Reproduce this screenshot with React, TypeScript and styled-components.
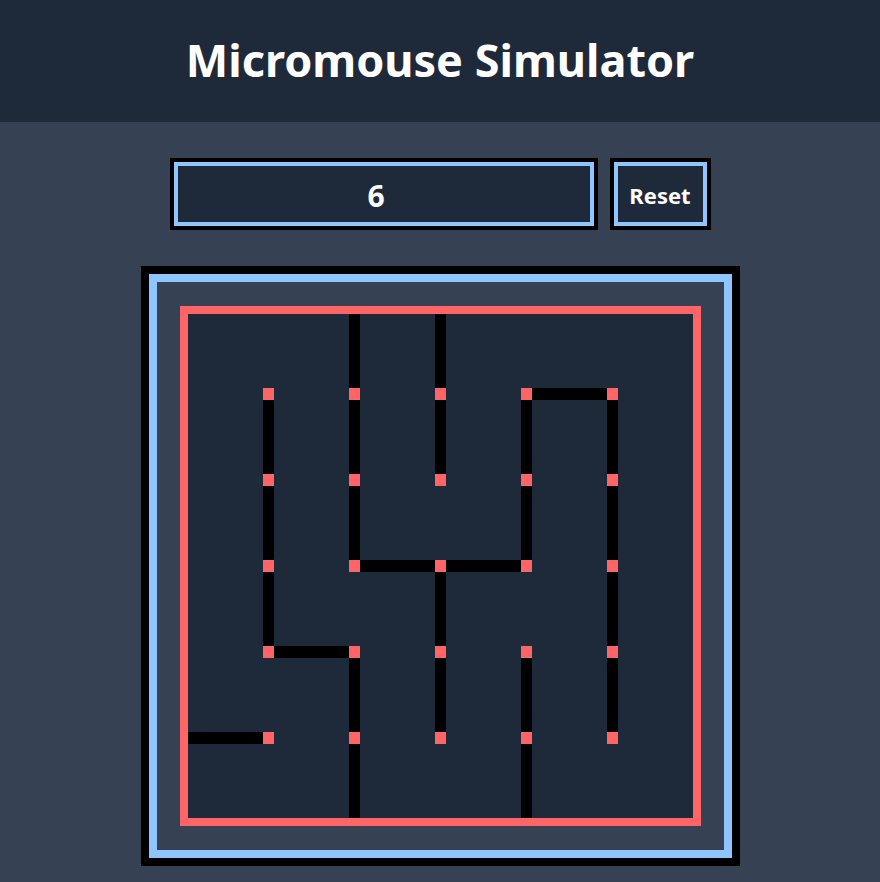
import React, { useState } from "react";
import styled, { createGlobalStyle, css } from "styled-components";

const color = {
  panel: "#1e2939",
  page: "#364153",
  accent: "#8ec5ff",
  edge: "#ff6467",
  wall: "#000000",
  text: "#ffffff",
};

const GlobalStyle = createGlobalStyle`
  *, *::before, *::after {
    box-sizing: border-box;
  }
  body {
    margin: 0;
    background: ${color.page};
    color: ${color.text};
    font-family: "Segoe UI", "Noto Sans", "Open Sans", sans-serif;
  }
`;

const Page = styled.div`
  display: flex;
  flex-direction: column;
`;

const Header = styled.header`
  padding: 24px 16px 26px;
  background: ${color.panel};
  text-align: center;
`;

const Title = styled.h1`
  margin: 0;
  font-size: 45px;
  line-height: 72px;
  font-weight: 700;
`;

const Main = styled.main`
  display: flex;
  flex-direction: column;
  align-items: center;
  gap: 36px;
  padding: 36px 16px 16px;
`;

const Controls = styled.form`
  display: grid;
  grid-template-columns: 1fr 101px;
  gap: 12px;
  width: 100%;
  max-width: 541px;
`;

const controlFrame = css`
  height: 72px;
  min-width: 0;
  padding: 6px 4px 4px;
  border: 4px solid ${color.wall};
  border-radius: 0;
  box-shadow: inset 0 0 0 4px ${color.accent};
  background: ${color.panel};
  color: ${color.text};
  font-family: inherit;
  font-weight: 700;
  text-align: center;
  outline: none;
`;

const SizeInput = styled.input`
  ${controlFrame}
  font-size: 30px;
`;

const ResetButton = styled.button`
  ${controlFrame}
  font-size: 22px;
  cursor: pointer;
`;

const Frame = styled.section`
  width: 100%;
  max-width: 599px;
  padding: 32px 31px;
  border: 8px solid ${color.wall};
  box-shadow: inset 0 0 0 8px ${color.accent};
`;

const Maze = styled.div`
  display: grid;
  grid-template-columns: 75fr repeat(5, 11fr 75fr);
  grid-template-rows: 74fr repeat(5, 12fr 74fr);
  aspect-ratio: 521 / 520;
  border: 8px solid ${color.edge};
  background: ${color.panel};
`;

const Piece = styled.div<{ $kind: "wall" | "post"; $row: number; $col: number }>`
  grid-row: ${(p) => p.$row};
  grid-column: ${(p) => p.$col};
  background: ${(p) => (p.$kind === "wall" ? color.wall : color.edge)};
`;

// Cells sit on odd grid tracks, posts and the walls between them on even ones.
const uprightWalls: Record<number, number[]> = {
  1: [2, 3, 4],
  2: [1, 2, 3, 5, 6],
  3: [1, 2, 4, 5],
  4: [2, 3, 5, 6],
  5: [2, 3, 4, 5],
};

const levelWalls: Record<number, number[]> = {
  1: [5],
  3: [3, 4],
  4: [2],
  5: [1],
};

const walls = [
  ...Object.entries(uprightWalls).flatMap(([post, rows]) =>
    rows.map((row) => ({ row: row * 2 - 1, col: Number(post) * 2 }))
  ),
  ...Object.entries(levelWalls).flatMap(([post, cols]) =>
    cols.map((col) => ({ row: Number(post) * 2, col: col * 2 - 1 }))
  ),
];

const posts = [1, 2, 3, 4, 5].flatMap((r) =>
  [1, 2, 3, 4, 5].map((c) => ({ row: r * 2, col: c * 2 }))
);

export default function App() {
  const [size, setSize] = useState("6");

  return (
    <Page>
      <GlobalStyle />
      <Header>
        <Title>Micromouse Simulator</Title>
      </Header>
      <Main>
        <Controls onSubmit={(e) => e.preventDefault()}>
          <SizeInput
            type="number"
            aria-label="Maze size"
            value={size}
            onChange={(e) => setSize(e.target.value)}
          />
          <ResetButton type="button" onClick={() => setSize("6")}>
            Reset
          </ResetButton>
        </Controls>
        <Frame aria-label="Maze">
          <Maze>
            {walls.map((w) => (
              <Piece key={`w${w.row}-${w.col}`} $kind="wall" $row={w.row} $col={w.col} />
            ))}
            {posts.map((p) => (
              <Piece key={`p${p.row}-${p.col}`} $kind="post" $row={p.row} $col={p.col} />
            ))}
          </Maze>
        </Frame>
      </Main>
    </Page>
  );
}
